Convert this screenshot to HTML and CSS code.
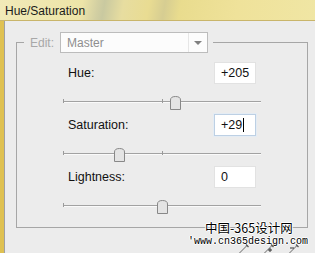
FILE: index.html
```html
<!DOCTYPE html>
<html lang="en">
<head>
    <meta charset="UTF-8">
    <meta name="viewport" content="width=device-width, initial-scale=1.0">
    <title>Hue/Saturation</title>
    <link rel="stylesheet" href="styles.css">
</head>
<body>
    <div class="titlebar">Hue/Saturation</div>

    <div class="window">
        <fieldset class="group">
            <legend>
                <div class="edit-row">
                    <span class="edit-label">Edit:</span>
                    <div class="dropdown">
                        <span>Master</span>
                        <span class="arrow"></span>
                    </div>
                </div>
            </legend>

            <div class="controls">
                <!-- Hue -->
                <div class="field">
                    <div class="field-head">
                        <label>Hue:</label>
                        <div class="value">+205</div>
                    </div>
                    <div class="slider">
                        <span class="track"></span>
                        <span class="tick"></span>
                        <span class="tick mid"></span>
                        <svg class="thumb" style="left: 107px" width="11" height="14" viewBox="0 0 11 14">
                            <path d="M0.5 13.5 V4 Q0.5 0.5 5.5 0.5 Q10.5 0.5 10.5 4 V13.5 Z" fill="#e4e4e4" stroke="#888"/>
                        </svg>
                    </div>
                </div>

                <!-- Saturation -->
                <div class="field">
                    <div class="field-head">
                        <label>Saturation:</label>
                        <div class="value focused">+29<span class="caret"></span></div>
                    </div>
                    <div class="slider">
                        <span class="track"></span>
                        <span class="tick"></span>
                        <span class="tick mid"></span>
                        <svg class="thumb" style="left: 51px" width="11" height="14" viewBox="0 0 11 14">
                            <path d="M0.5 13.5 V4 Q0.5 0.5 5.5 0.5 Q10.5 0.5 10.5 4 V13.5 Z" fill="#e4e4e4" stroke="#888"/>
                        </svg>
                    </div>
                </div>

                <!-- Lightness -->
                <div class="field">
                    <div class="field-head">
                        <label>Lightness:</label>
                        <div class="value">0</div>
                    </div>
                    <div class="slider">
                        <span class="track"></span>
                        <span class="tick"></span>
                        <span class="tick mid"></span>
                        <svg class="thumb" style="left: 94px" width="11" height="14" viewBox="0 0 11 14">
                            <path d="M0.5 13.5 V4 Q0.5 0.5 5.5 0.5 Q10.5 0.5 10.5 4 V13.5 Z" fill="#e4e4e4" stroke="#888"/>
                        </svg>
                    </div>
                </div>
            </div>
        </fieldset>

        <div class="watermark">
            <div class="wm-cn">中国-365设计网</div>
            <div class="wm-url">'www.cn365design.com</div>
        </div>

        <div class="droppers">
            <svg width="14" height="12" viewBox="0 0 14 12">
                <path d="M1 11.5 L9 3.5" stroke="#666" stroke-width="1" fill="none"/>
                <path d="M8 2.5 L10.5 5" stroke="#555" stroke-width="1.3"/>
            </svg>
            <svg width="14" height="12" viewBox="0 0 14 12">
                <path d="M1 11.5 L9 3.5" stroke="#666" stroke-width="1" fill="none"/>
                <path d="M8 2.5 L10.5 5" stroke="#555" stroke-width="1.3"/>
                <path d="M5 8 H9 M7 6 V10" stroke="#333" stroke-width="1"/>
            </svg>
            <svg width="14" height="12" viewBox="0 0 14 12">
                <path d="M1 11.5 L9 3.5" stroke="#666" stroke-width="1" fill="none"/>
                <path d="M8 2.5 L10.5 5" stroke="#555" stroke-width="1.3"/>
                <path d="M2 6 H6" stroke="#333" stroke-width="1"/>
            </svg>
        </div>
    </div>
</body>
</html>
```

FILE: styles.css
```css
body {
    font-family: "Liberation Sans", Arial, sans-serif;
    font-size: 12px;
    margin: 0;
    width: 315px;
    height: 253px;
    overflow: hidden;
    background-color: #dfc152;
}

.titlebar {
    height: 21px;
    box-sizing: border-box;
    padding: 4px 0 0 5px;
    font-size: 12px;
    color: #1a1a1a;
    background: linear-gradient(100deg, #f1eab8 0%, #ede4a8 26%, #d2cfa2 31%, #c9c9a0 33%, #e7dda0 39%, #e9dc92 47%, #d6cd92 52%, #e9dc8e 57%, #efe29a 75%, #f0e6a4 100%);
    border-bottom: 1px solid #c9b56a;
}

.window {
    position: relative;
    margin-left: 4px;
    height: 232px;
    box-sizing: border-box;
    padding: 11px 0 0 11px;
    background-color: #ececec;
    border-left: 1px solid #a0a0a0;
}

.group {
    margin: 0;
    width: 292px;
    box-sizing: border-box;
    padding: 0 0 0 7px;
    border: 1px solid #a6a6a6;
}

legend {
    padding: 0 5px 0 6px;
}

.edit-row {
    display: flex;
    align-items: center;
    gap: 6px;
}

.edit-label {
    color: #a8a8a8;
    width: 24px;
}

.dropdown {
    width: 148px;
    height: 21px;
    box-sizing: border-box;
    display: flex;
    align-items: center;
    justify-content: space-between;
    padding-left: 6px;
    border: 1px solid #bcbcbc;
    background-color: #fcfcfc;
    color: #8e8e8e;
}

.arrow {
    width: 18px;
    height: 19px;
    border-left: 1px solid #e6e6e6;
    position: relative;
}

.arrow::after {
    content: "";
    position: absolute;
    left: 5px;
    top: 8px;
    border-left: 4px solid transparent;
    border-right: 4px solid transparent;
    border-top: 4px solid #808080;
}

.controls {
    margin: 9px 0 9px 39px;
    width: 198px;
}

.field-head {
    height: 22px;
    display: flex;
    align-items: center;
    justify-content: space-between;
}

.field-head label {
    padding-left: 5px;
    font-size: 12.5px;
    color: #111;
}

.value {
    width: 42px;
    height: 22px;
    box-sizing: border-box;
    margin-right: 5px;
    padding-left: 6px;
    line-height: 20px;
    font-size: 12.5px;
    border: 1px solid #e2e2e2;
    background-color: #ffffff;
    color: #111;
}

.value.focused {
    border-color: #bdd0e4;
    box-shadow: 0 0 0 1px #e4ecf4;
}

.caret {
    display: inline-block;
    width: 1px;
    height: 14px;
    margin-left: 1px;
    vertical-align: -3px;
    background-color: #000;
}

.slider {
    position: relative;
    height: 30px;
}

.track {
    position: absolute;
    left: 0;
    right: 0;
    top: 17px;
    height: 1px;
    background-color: #a2a2a2;
    border-bottom: 1px solid #fafafa;
}

.tick {
    position: absolute;
    left: 0;
    top: 15px;
    width: 1px;
    height: 4px;
    background-color: #9a9a9a;
}

.tick.mid {
    left: 99px;
}

.thumb {
    position: absolute;
    top: 12px;
}

.watermark {
    position: absolute;
    left: 183px;
    top: 199px;
    color: #000;
    text-shadow: 1px 0 0 #fff, -1px 0 0 #fff, 0 1px 0 #fff, 0 -1px 0 #fff;
}

.wm-cn {
    margin-left: 17px;
    font-family: "Noto Sans CJK SC", sans-serif;
    font-size: 12.5px;
    line-height: 15px;
}

.wm-url {
    font-family: "Liberation Mono", monospace;
    font-size: 10px;
    line-height: 13px;
}

.droppers {
    position: absolute;
    left: 233px;
    top: 221px;
    display: flex;
    gap: 11px;
}
```
